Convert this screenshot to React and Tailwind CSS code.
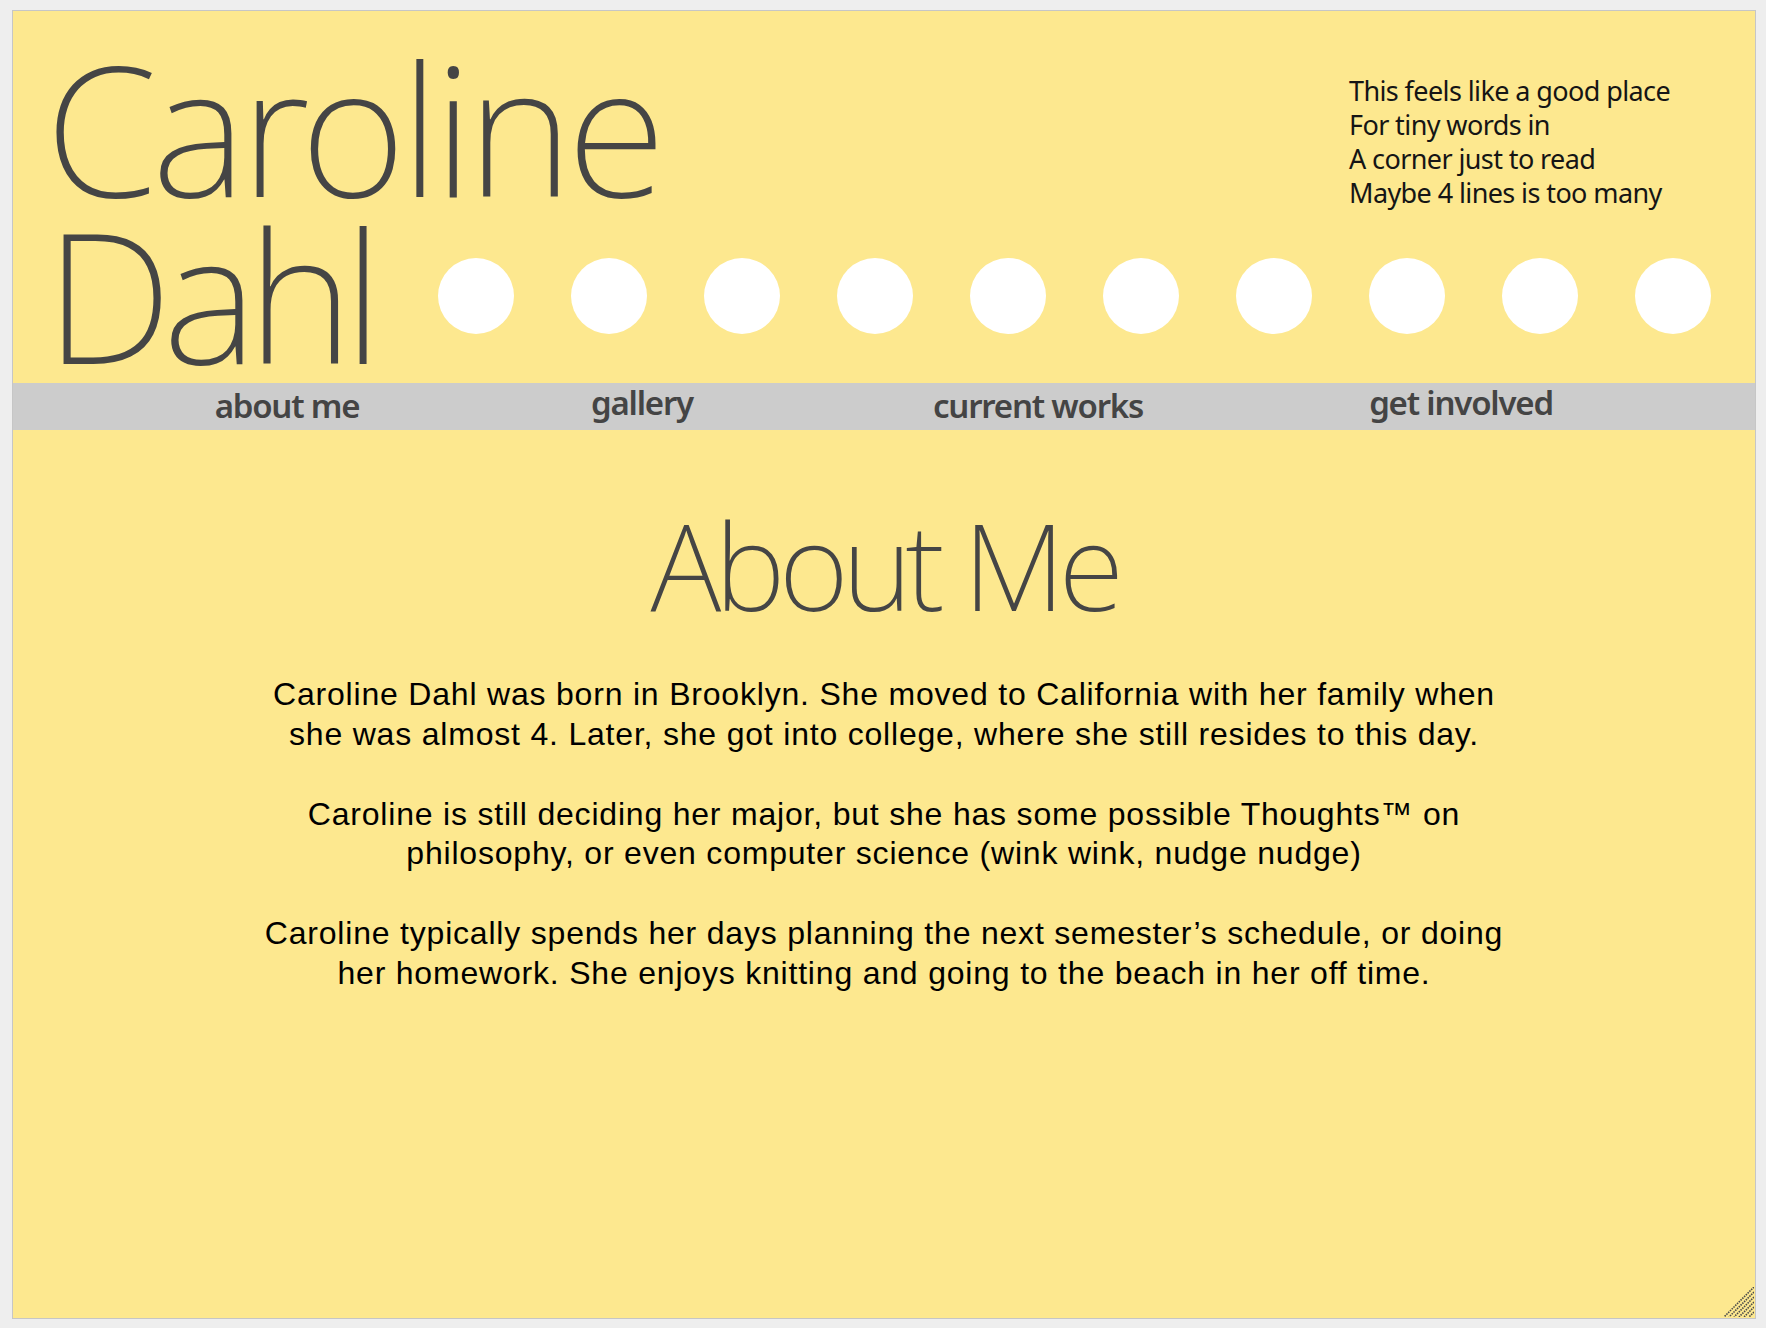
export default function App() {
  const circles = Array.from({ length: 10 });
  const heading = { fontFamily: "'Noto Sans', 'Open Sans', sans-serif" };
  return (
    <div className="w-[1766px] h-[1328px] bg-[#eeeeee] pt-[10px] pl-[12px] overflow-hidden">
      <div className="relative w-[1744px] h-[1309px] bg-[#fde88f] border border-[#c6c6c6]" style={heading}>
        <header className="pt-[32px] pb-[6px]">
          <div className="flex h-[167px]">
            <div className="pl-[32px] text-[182px] leading-[167px] font-extralight tracking-[-6px] text-[#454545] whitespace-nowrap">
              Caroline
            </div>
            <div className="ml-auto w-[406px] mt-[31px] text-[27px] leading-[34px] tracking-[-0.6px] text-[#151515]">
              <div>This feels like a good place</div>
              <div>For tiny words in</div>
              <div>A corner just to read</div>
              <div>Maybe 4 lines is too many</div>
            </div>
          </div>
          <div className="flex items-center h-[167px]">
            <div className="pl-[32px] text-[182px] leading-[167px] font-extralight tracking-[-10px] text-[#454545] whitespace-nowrap">
              Dahl
            </div>
            <div className="ml-auto mr-[44px] mt-[5px] flex gap-[57px]">
              {circles.map((_, i) => (
                <div key={i} className="w-[76px] h-[76px] rounded-full bg-white" />
              ))}
            </div>
          </div>
        </header>
        <nav className="h-[47px] bg-[#cccccc] flex items-start text-[33px] font-semibold tracking-[-1.2px] text-[#444444] leading-[44px]">
          <span className="ml-[174px] w-[200px] text-center mt-[1px]">about me</span>
          <span className="ml-[155px] w-[200px] text-center mt-[-2px]">gallery</span>
          <span className="ml-[191px] w-[200px] text-center mt-[1px] whitespace-nowrap">current works</span>
          <span className="ml-[228px] w-[200px] text-center mt-[-2px] whitespace-nowrap">get involved</span>
        </nav>
        <h1 className="mt-[70px] text-center text-[120px] leading-[130px] font-extralight tracking-[-6.5px] text-[#454545]">
          About Me
        </h1>
        <div
          className="mt-[45px] text-center text-[32px] leading-[39.5px] tracking-[0.8px] text-black"
          style={{ fontFamily: "'Liberation Sans', Arial, sans-serif" }}
        >
          <p className="whitespace-nowrap">
            Caroline Dahl was born in Brooklyn. She moved to California with her family when
            <br />
            she was almost 4. Later, she got into college, where she still resides to this day.
          </p>
          <p className="mt-[40.5px] whitespace-nowrap">
            Caroline is still deciding her major, but she has some possible Thoughts™ on
            <br />
            philosophy, or even computer science (wink wink, nudge nudge)
          </p>
          <p className="mt-[40.5px] whitespace-nowrap">
            Caroline typically spends her days planning the next semester’s schedule, or doing
            <br />
            her homework. She enjoys knitting and going to the beach in her off time.
          </p>
        </div>
        <svg
          className="absolute right-[1px] bottom-[1px]"
          width="30"
          height="30"
          viewBox="0 0 30 30"
        >
          {[5, 10, 15, 20, 25, 30].map((k) => (
            <line
              key={k}
              x1={30}
              y1={30 - k}
              x2={30 - k}
              y2={30}
              stroke="#4a4a4a"
              strokeWidth="1.6"
              strokeDasharray="1.5 1"
            />
          ))}
        </svg>
      </div>
    </div>
  );
}
